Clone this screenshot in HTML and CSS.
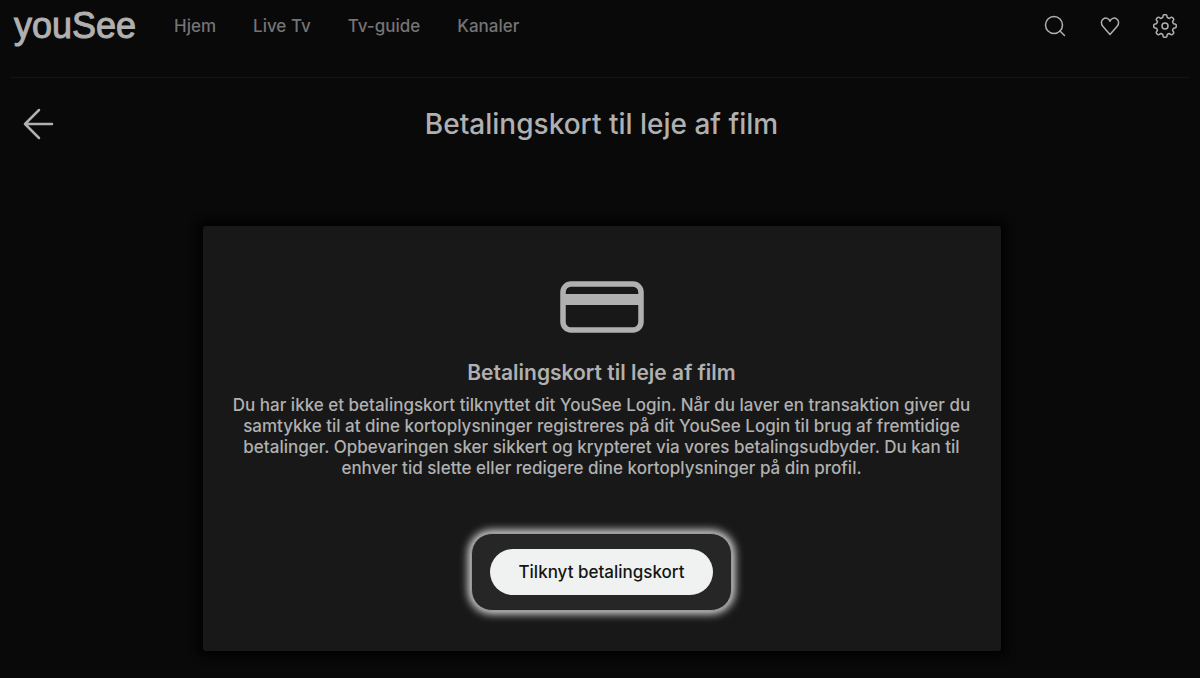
FILE: index.html
```
<!DOCTYPE html>
<html lang="da">
<head>
  <meta charset="UTF-8">
  <title>YouSee – Betalingskort</title>
  <meta name="viewport" content="width=device-width, initial-scale=1">
  <link rel="stylesheet" href="styles.css">
</head>
<body>

  <header class="top-bar">
    <a href="#" class="logo">youSee</a>
    <nav class="main-nav">
      <a href="#">Hjem</a>
      <a href="#">Live Tv</a>
      <a href="#">Tv-guide</a>
      <a href="#">Kanaler</a>
    </nav>
    <div class="tools">
      <button class="icon-btn" aria-label="Søg">
        <svg width="26" height="26" viewBox="0 0 26 26">
          <circle cx="12" cy="12" r="8.5"/>
          <path d="M18 18l4.5 4.5"/>
        </svg>
      </button>
      <button class="icon-btn" aria-label="Favoritter">
        <svg width="26" height="26" viewBox="0 0 26 26">
          <path d="M13 21.5L6 13.6C3.6 10.8 4 7.4 6.4 5.8C9 4.2 12 5.4 13 8.2C14 5.4 17 4.2 19.6 5.8C22 7.4 22.4 10.8 20 13.6Z"/>
        </svg>
      </button>
      <button class="icon-btn" aria-label="Indstillinger">
        <svg width="26" height="26" viewBox="-13 -13 26 26">
          <path d="M-2.2-8.6Q-1.9-11.2-1-11.2H1Q1.9-11.2 2.2-8.6Q3.2-7.7 4.5-7.6Q6.6-9.3 7.2-8.6L8.6-7.2Q9.3-6.6 7.6-4.5Q7.7-3.2 8.6-2.2Q11.2-1.9 11.2-1V1Q11.2 1.9 8.6 2.2Q7.7 3.2 7.6 4.5Q9.3 6.6 8.6 7.2L7.2 8.6Q6.6 9.3 4.5 7.6Q3.2 7.7 2.2 8.6Q1.9 11.2 1 11.2H-1Q-1.9 11.2-2.2 8.6Q-3.2 7.7-4.5 7.6Q-6.6 9.3-7.2 8.6L-8.6 7.2Q-9.3 6.6-7.6 4.5Q-7.7 3.2-8.6 2.2Q-11.2 1.9-11.2 1V-1Q-11.2-1.9-8.6-2.2Q-7.7-3.2-7.6-4.5Q-9.3-6.6-8.6-7.2L-7.2-8.6Q-6.6-9.3-4.5-7.6Q-3.2-7.7-2.2-8.6Z"/>
          <circle r="3"/>
        </svg>
      </button>
    </div>
  </header>

  <main>
    <div class="page-head">
      <button class="back-btn" aria-label="Tilbage">
        <svg width="32" height="32" viewBox="0 0 32 32">
          <path d="M29 16H2M16 2L2 16l14 14"/>
        </svg>
      </button>
      <h1>Betalingskort til leje af film</h1>
    </div>

    <section class="card">
      <svg class="card-icon" width="84" height="52" viewBox="0 0 84 52">
        <rect x="3" y="3" width="78" height="46" rx="8"/>
        <path d="M3 18.5h78"/>
      </svg>
      <h2>Betalingskort til leje af film</h2>
      <p>Du har ikke et betalingskort tilknyttet dit YouSee Login. Når du laver en transaktion giver du samtykke til at dine kortoplysninger registreres på dit YouSee Login til brug af fremtidige betalinger. Opbevaringen sker sikkert og krypteret via vores betalingsudbyder. Du kan til enhver tid slette eller redigere dine kortoplysninger på din profil.</p>
      <div class="highlight">
        <button class="add-btn">Tilknyt betalingskort</button>
      </div>
    </section>
  </main>

</body>
</html>
```
FILE: styles.css
```
* { box-sizing:border-box; margin:0; padding:0 }
body {
  font-family: Inter, "Liberation Sans", sans-serif;
  min-height: 100vh;
  background: #090909;
  color: #b0b0b0;
}
a { color:inherit; text-decoration:none; }
button {
  font-family:inherit;
  border:none;
  background:none;
  color:inherit;
  cursor:pointer;
}
svg {
  display:block;
  fill:none;
  stroke:currentColor;
  stroke-linecap:round;
  stroke-linejoin:round;
}

.top-bar {
  display:flex;
  align-items:center;
  height:78px;
  margin:0 10px;
  padding:0 12px 26px 4px;
  border-bottom:1px solid #141414;
}
.logo {
  width:160px;
  font-family:"Liberation Sans", sans-serif;
  font-size:36px;
  line-height:48px;
  -webkit-text-stroke:1px;
}
.main-nav {
  display:flex;
  gap:37px;
  font-size:17px;
  font-weight:500;
  color:#747474;
}
.tools {
  display:flex;
  gap:29px;
  margin-left:auto;
}
.icon-btn svg { stroke-width:1.5; }

main { padding-left:3px; }
.page-head {
  display:grid;
  grid-template-columns:32px 1fr 32px;
  align-items:center;
  padding:24px 20px 0;
}
.back-btn svg { stroke-width:2.5; }
h1 {
  font-size:28px;
  line-height:44px;
  font-weight:500;
  text-align:center;
}

.card {
  display:flex;
  flex-direction:column;
  align-items:center;
  width:calc(100% - 60px);
  max-width:798px;
  margin:80px auto 28px;
  padding:55px 28px 40px;
  background:#181818;
  border-radius:3px;
  box-shadow:0 0 8px 6px #030303;
  text-align:center;
}
.card-icon { stroke-width:5.5; }
.card-icon path { stroke-width:11; stroke-linecap:butt; }
h2 {
  margin-top:24px;
  font-size:21px;
  line-height:32px;
  font-weight:600;
}
.card p {
  margin-top:6px;
  font-size:17px;
  line-height:21px;
  font-weight:500;
}
.highlight {
  margin-top:54px;
  padding:15px 18px;
  background:#262626;
  border:1px solid #999;
  border-radius:21px;
  box-shadow:0 0 9px 3px #d8d8d8;
}
.add-btn {
  height:46px;
  padding:0 28px;
  border-radius:23px;
  background:#f0f2f2;
  color:#151515;
  font-size:17px;
  font-weight:500;
}
```
